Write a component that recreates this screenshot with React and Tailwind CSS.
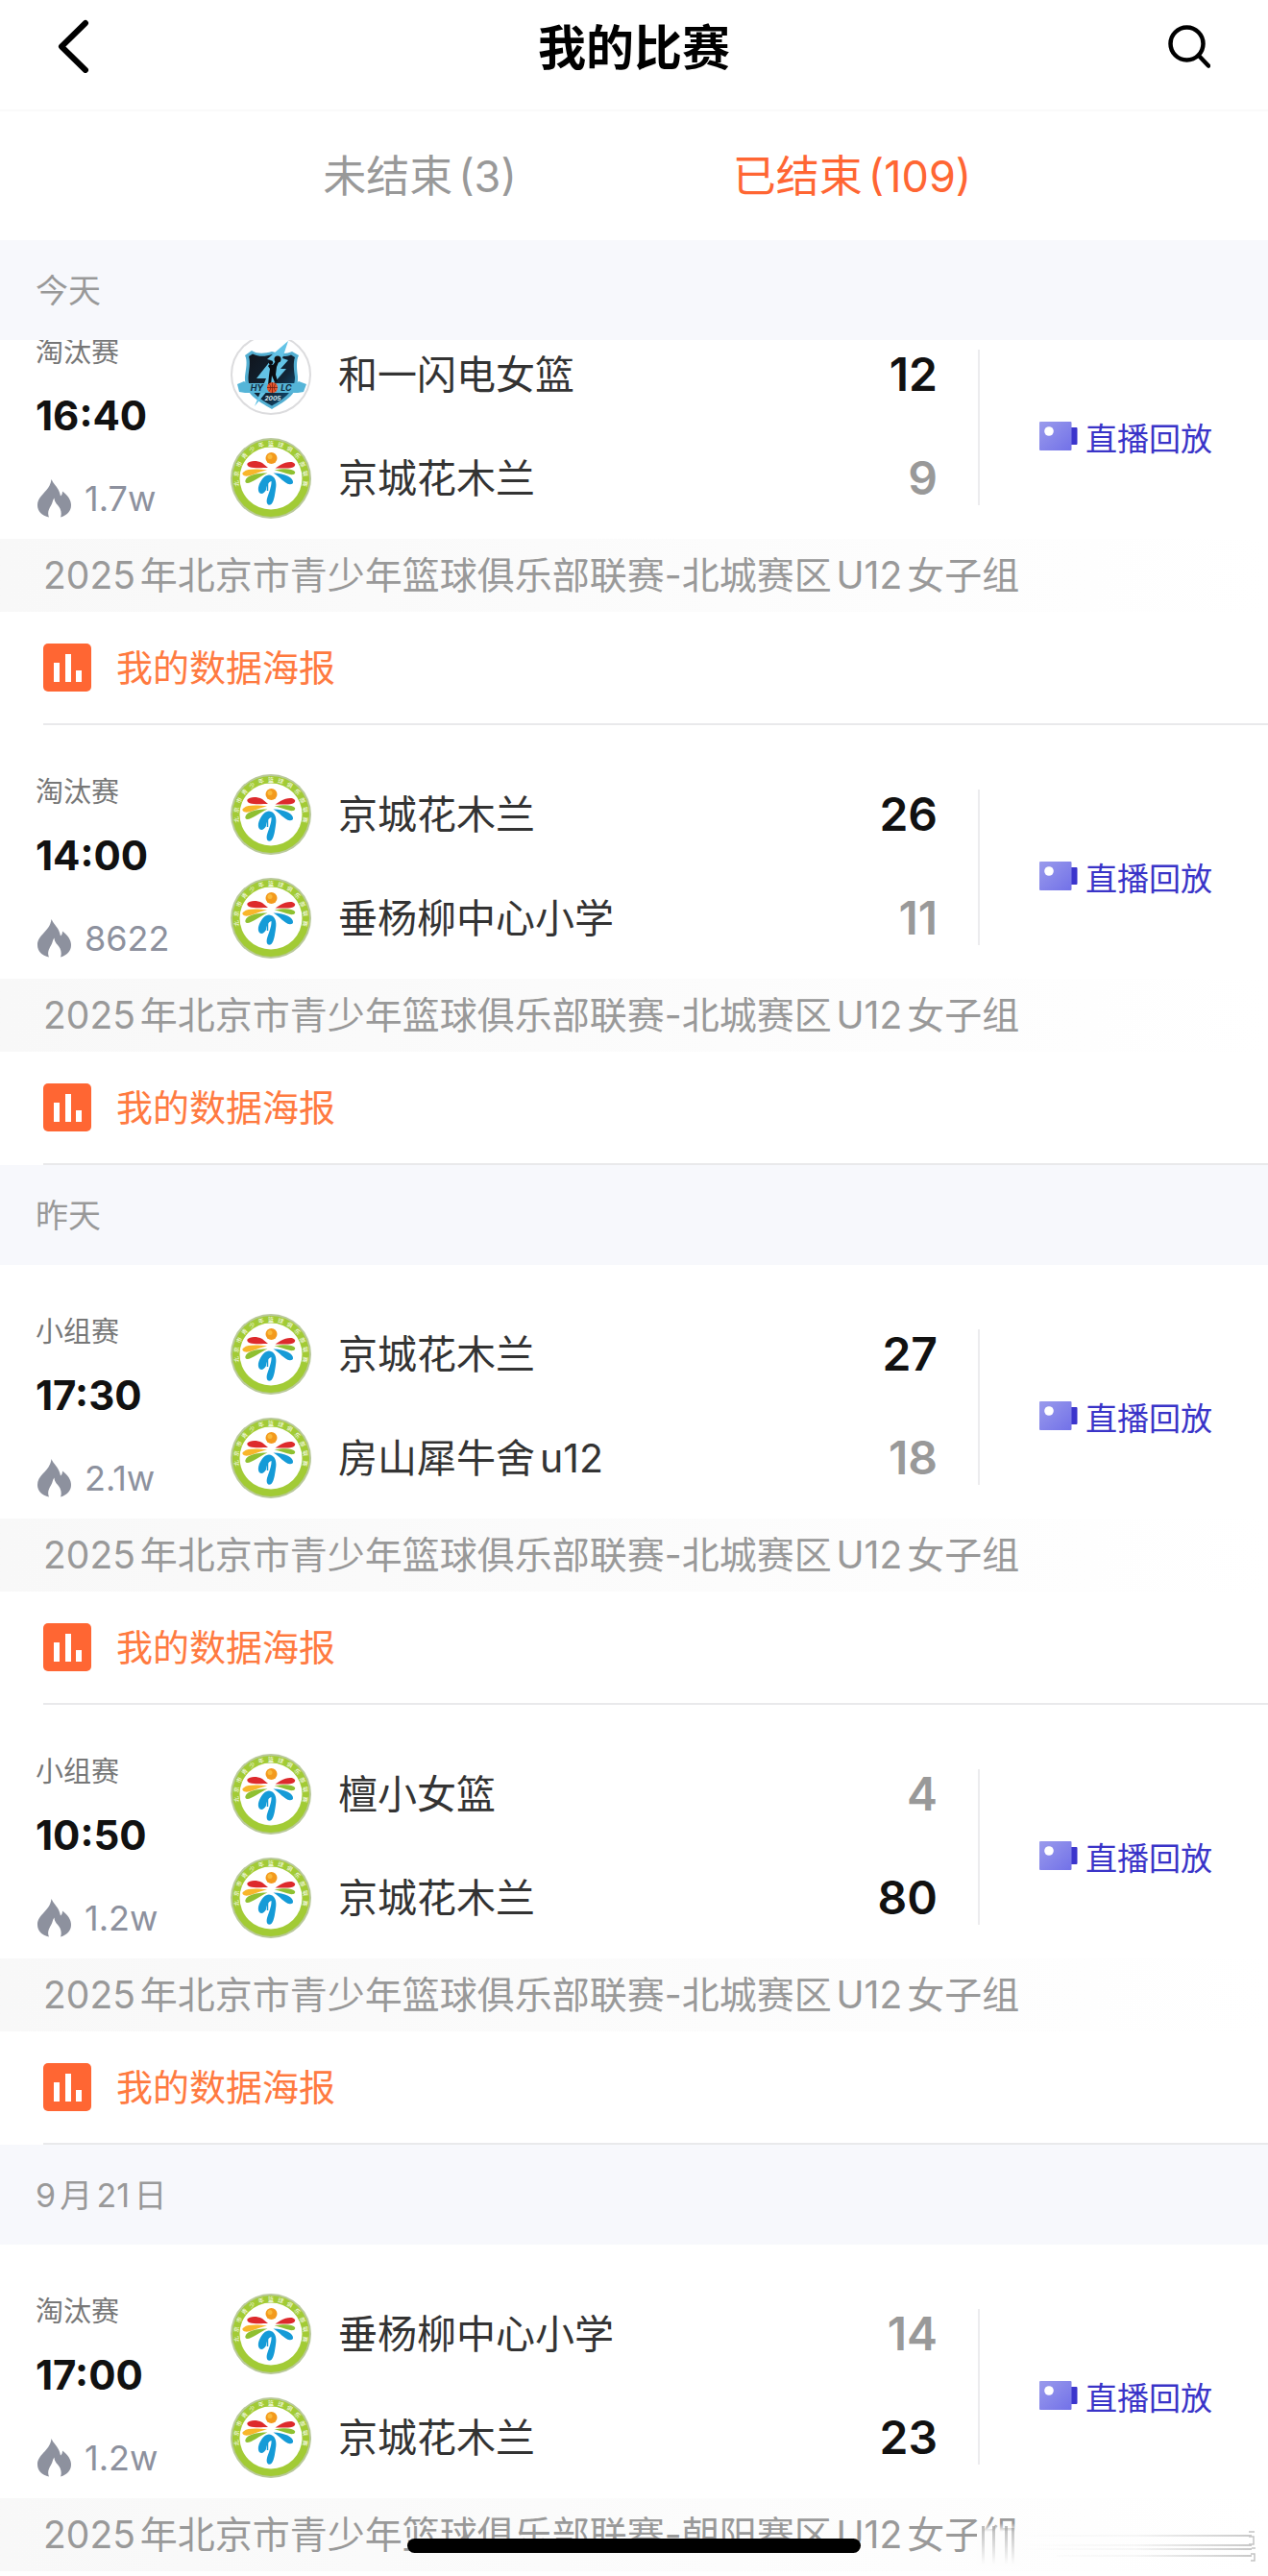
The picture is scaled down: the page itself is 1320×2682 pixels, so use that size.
const days = [
  {
    title: '今天',
    scrolled: true,
    games: [
      { stage: '淘汰赛', time: '16:40', views: '1.7w', area: '北城', teams: [['和一闪电女篮', 12, 'hylc'], ['京城花木兰', 9]] },
      { stage: '淘汰赛', time: '14:00', views: '8622', area: '北城', teams: [['京城花木兰', 26], ['垂杨柳中心小学', 11]] },
    ],
  },
  {
    title: '昨天',
    games: [
      { stage: '小组赛', time: '17:30', views: '2.1w', area: '北城', teams: [['京城花木兰', 27], ['房山犀牛舍u12', 18]] },
      { stage: '小组赛', time: '10:50', views: '1.2w', area: '北城', teams: [['檀小女篮', 4], ['京城花木兰', 80]] },
    ],
  },
  {
    title: '9月21日',
    games: [
      { stage: '淘汰赛', time: '17:00', views: '1.2w', area: '朝阳', last: true, teams: [['垂杨柳中心小学', 14], ['京城花木兰', 23]] },
    ],
  },
];

const ringText = '北京市青少年篮球俱乐部联赛'.split('');

function LeagueLogo() {
  return (
    <svg viewBox="0 0 84 84" className="size-[84px] shrink-0" aria-hidden="true">
      <circle cx="42" cy="42" r="42" fill="#b9c99a" />
      <circle cx="42" cy="42" r="40" fill="#a2cb35" />
      <circle cx="42" cy="42" r="32.5" fill="#fff" />
      {ringText.map((c, i) => (
        <text key={i} x="42" y="8" fontSize="6" fill="#fff" textAnchor="middle" transform={`rotate(${-99 + i * 16.5} 42 42)`}>
          {c}
        </text>
      ))}
      <circle cx="42.500" cy="21" r="6" fill="#f39a1d" />
      <circle cx="41" cy="19.500" r="2.500" fill="#f9bb3d" />
      <path d="M17.500 26.500C20 23.500 27 23 33 26L39 31C33 30.500 22 32.500 18.500 29.500C17.500 28.500 17 27.500 17.500 26.500Z" fill="#dd2a2c" />
      <path d="M67 27C65 23.800 58 24.500 52 28L46.500 31.500C53 31 62 32.500 66 30C67 29 67.500 28 67 27Z" fill="#dd2a2c" />
      <path d="M12.500 36.500C15 32.500 24 31.500 38 33.500C28 35.500 20 40.500 15 39.500C13 39 12 37.500 12.500 36.500Z" fill="#f8b62b" />
      <path d="M67 35C64 31.500 55 31.500 45.500 33.500C54 35 61 39 65.500 38C67 37.500 67.500 36 67 35Z" fill="#8fc031" />
      <path d="M15.500 44C17 39 26 36.500 38.500 36.500C31 39.500 22 47 17.500 47C15.500 47 15 45.500 15.500 44Z" fill="#8fc031" />
      <path d="M65 46.500C66 41.500 57 37 44.500 36.500C51 40 56 47.500 61.500 48.200C63.500 48.400 64.700 47.800 65 46.500Z" fill="#159bd7" />
      <path d="M40 38.500C46 39 48.500 45 47 53C46 60 45 68 41.500 69.600C38 70.500 37 67 38 63C39.500 58 43 50 42.500 45C39 46 37.500 50 37 54C36 56 34 58 32 58C28 57.500 28 51 31 46C33.500 41.500 36 38.800 40 38.500Z" fill="#159bd7" />
      <path d="M38.500 45V55" stroke="#159bd7" strokeWidth="1.500" />
    </svg>
  );
}

function LightningLogo() {
  return (
    <svg viewBox="0 0 84 84" className="size-[84px] shrink-0" aria-hidden="true">
      <defs>
        <linearGradient id="shield" x1="0" y1="0" x2="1" y2="1">
          <stop offset="0" stopColor="#10151d" />
          <stop offset=".6" stopColor="#122536" />
          <stop offset="1" stopColor="#0c5c8e" />
        </linearGradient>
      </defs>
      <circle cx="42" cy="42" r="41" fill="#fff" stroke="#dcdcde" strokeWidth="2" />
      <path d="M15 22L22 17C28 21 36 20 43 18C50 20 58 21 64 18L71 22C68 28 69 36 70 44C71 62 58 69 43 78C28 69 14 62 15 44C16 36 18 28 15 22Z" fill="#53afd2" />
      <path d="M19 23L23 20.500C30 24 37 23 43 21C50 23 57 24 63 21.500L67 24C65 30 66 37 67 45C67 59 56 67 43 74.500C30 67 18 59 18.500 45C19 37 21 30 19 23Z" fill="url(#shield)" />
      <path d="M60 7L38 26L42 27L27 46L37 46L25 75L39 58L58 36L52 36L60 27L54 25Z" fill="#63c3e6" />
      <path d="M7 52L14 49L17 51H68L71 49L79 52L76 60L70 61H15L9 60Z" fill="#55b5d8" />
      <circle cx="49" cy="26" r="3.500" fill="#111" />
      <path d="M47 28L50 29L48 34L47 42L49 49L46 50L43 43L42 53H39L40 43L41 36L39 33L41 31L44 32Z" fill="#0a0d12" />
      <circle cx="42" cy="29.500" r="2.200" fill="#0a0d12" />
      <text x="27.500" y="59" fontSize="9" fontWeight="700" fontStyle="italic" fill="#102b40" textAnchor="middle">HY</text>
      <text x="58" y="59" fontSize="9" fontWeight="700" fontStyle="italic" fill="#102b40" textAnchor="middle">LC</text>
      <circle cx="43.500" cy="55.500" r="5.500" fill="#e4552b" />
      <path d="M38 55.500H49M43.500 50V61M40 51.500Q43.500 55.500 40 59.500M47 51.500Q43.500 55.500 47 59.500" stroke="#6d1d10" strokeWidth=".7" fill="none" />
      <text x="44" y="69" fontSize="6.500" fontWeight="700" fontStyle="italic" fill="#d8eef5" textAnchor="middle">2005</text>
    </svg>
  );
}

function Flame() {
  return (
    <svg viewBox="0 0 35 40" className="h-10 w-[35px]" fill="#8d919e" aria-hidden="true">
      <path d="M14.500 0C17 6 22.500 8.500 24 17.500C25.500 16.500 26 14.500 26 12.500C32 17 35 22 35 27C35 33 31 37.500 24 39.500C25 37 25 34 23.500 30.500C21.500 26.500 17.500 24.500 17.500 19.500C15.500 22 16 24 14 27.500C12 31 10 34.500 12 39.500C4.500 38 0 33 0 27C0 16 13 13 14.500 0Z" />
    </svg>
  );
}

function Video() {
  return (
    <svg viewBox="0 0 40 30" className="h-[30px] w-10" aria-hidden="true">
      <defs>
        <linearGradient id="cam" x1="0" y1="0" x2="1" y2="1">
          <stop offset="0" stopColor="#9a9bec" />
          <stop offset="1" stopColor="#7271e8" />
        </linearGradient>
      </defs>
      <rect x="31" y="6" width="8.500" height="18" rx="1" fill="#3b35cc" />
      <rect width="33.500" height="30" rx="1" fill="url(#cam)" />
      <circle cx="10" cy="10" r="4.800" fill="#fff" />
    </svg>
  );
}

function Smudge() {
  return (
    <svg viewBox="0 0 320 60" className="absolute right-0 bottom-0 h-[60px] w-80" aria-hidden="true">
      <defs>
        <linearGradient id="cover" x1="0" y1="0" x2="0" y2="1">
          <stop offset="0" stopColor="#fdfdfd" stopOpacity="0" />
          <stop offset=".2" stopColor="#fdfdfd" />
        </linearGradient>
        <linearGradient id="drip" x1="0" y1="0" x2="0" y2="1">
          <stop offset="0" stopColor="#8f8f8f" stopOpacity=".6" />
          <stop offset="1" stopColor="#8f8f8f" stopOpacity="0" />
        </linearGradient>
        <linearGradient id="streak">
          <stop offset="0" stopColor="#777" stopOpacity="0" />
          <stop offset=".5" stopColor="#777" stopOpacity=".06" />
          <stop offset="1" stopColor="#777" stopOpacity=".4" />
        </linearGradient>
      </defs>
      <rect x="17" y="5" width="45" height="45" fill="url(#cover)" />
      <path d="M22 8h3v40h-3zM33 8h3v40h-3zM46 8h3v40h-3zM53 10h3v38h-3z" fill="url(#drip)" />
      <path d="M60 17h243v2H60zM60 27h243v2H60zM60 31h243v2H60zM100 38h203v2H100z" fill="url(#streak)" />
      <path d="M300 14h6M300 19h5v8h-5M302 37h4v7h-4M303 31h4" fill="none" stroke="#c4c4c4" strokeWidth="1.500" />
    </svg>
  );
}

function Team({ name, score, win, logo }) {
  return (
    <div className="flex h-[84px] items-center">
      {logo === 'hylc' ? <LightningLogo /> : <LeagueLogo />}
      <span className="ml-7 flex-1 text-[41px] leading-[60px] text-[#333]">{name}</span>
      <span className={win ? 'text-[48px] leading-[60px] font-semibold text-[#111]' : 'text-[48px] leading-[60px] font-semibold text-[#999]'}>{score}</span>
    </div>
  );
}

function Game({ stage, time, views, area, teams, last }) {
  const top = Math.max(teams[0][1], teams[1][1]);
  return (
    <article>
      <div className="flex h-[264px]">
        <div className="flex w-60 shrink-0 flex-col pt-12 pl-[37px]">
          <span className="text-[29px] leading-[44px] text-[#777]">{stage}</span>
          <time className="mt-4 text-[42px] leading-[56px] font-bold text-[#111]">{time}</time>
          <span className="mt-9 ml-0.5 flex items-center gap-[14px] text-[36px] leading-[44px] text-[#8d919e]">
            <Flame />
            {views}
          </span>
        </div>
        <div className="flex flex-1 flex-col gap-6 pt-[51px] pr-[42px]">
          {teams.map(([name, score, logo]) => (
            <Team key={name} name={name} score={score} logo={logo} win={score === top} />
          ))}
        </div>
        <div className="mt-[67px] flex h-[162px] w-[302px] shrink-0 items-center justify-end border-l-2 border-[#ececee] pt-6 pr-[58px]">
          <a href="#replay" className="flex items-start gap-2 text-[33px] leading-[36px] whitespace-nowrap text-[#3a34c8]">
            <Video />
            直播回放
          </a>
        </div>
      </div>
      <p className="h-[76px] bg-linear-to-r from-[#f8f8f8] to-white pl-[45px] text-[39px] leading-[76px] whitespace-nowrap text-[#999]">
        2025年北京市青少年篮球俱乐部联赛-{area}赛区U12女子组
      </p>
      {!last && (
        <a href="#poster" className="ml-[45px] flex h-[118px] items-center gap-[26px] border-b-2 border-[#e9e9eb] text-[38px] leading-[56px] text-[#ff7a40]">
          <svg viewBox="0 0 50 50" className="size-[50px]" aria-hidden="true">
            <rect width="50" height="50" rx="5" fill="#ff6633" />
            <path d="M11 20h6v20h-6zM23 11h6v29h-6zM34 28h6v12h-6z" fill="#fff" />
          </svg>
          我的数据海报
        </a>
      )}
    </article>
  );
}

export default function App() {
  return (
    <div className="relative overflow-hidden bg-white pb-[5px] font-['Inter','Noto_Sans_CJK_SC',sans-serif] [text-autospace:normal]" lang="zh-CN">
      <header className="flex h-[116px] items-start justify-between border-b-2 border-[#fafafa] px-[60px] pt-5">
        <button aria-label="返回" className="h-14 w-11">
          <svg viewBox="0 0 44 56" className="h-14 w-11" fill="none" stroke="#000" strokeWidth="6" strokeLinecap="round" strokeLinejoin="round">
            <path d="M29 4L4 28.500L29 53" />
          </svg>
        </button>
        <h1 className="text-[50px] leading-[60px] font-bold text-black">我的比赛</h1>
        <button aria-label="搜索" className="h-14 w-11">
          <svg viewBox="0 0 44 56" className="h-14 w-11" fill="none" stroke="#000" strokeWidth="4.500" strokeLinecap="round">
            <circle cx="19.500" cy="25.500" r="17" />
            <path d="M32 38L42 48.500" />
          </svg>
        </button>
      </header>
      <nav className="flex h-[134px] items-center justify-center pt-0.5 pl-1 text-[45px] leading-[60px]">
        <button className="flex w-[450px] justify-center gap-1.5 text-[#999]">
          未结束<span>(3)</span>
        </button>
        <button className="flex w-[450px] justify-center gap-1.5 text-[#ff6633]">
          已结束<span>(109)</span>
        </button>
      </nav>
      <main>
        {days.map((day) => (
          <section key={day.title}>
            <h2 className="relative z-10 h-[104px] bg-[#f7f8fc] pl-[37px] text-[34px] leading-[106px] text-[#999]">{day.title}</h2>
            <div className={day.scrolled ? '-mt-[57px]' : ''}>
              {day.games.map((game) => (
                <Game key={game.time} {...game} />
              ))}
            </div>
          </section>
        ))}
      </main>
      <Smudge />
      <div className="absolute bottom-6 left-1/2 h-[15px] w-[472px] -translate-x-1/2 rounded-full bg-black" />
    </div>
  );
}
